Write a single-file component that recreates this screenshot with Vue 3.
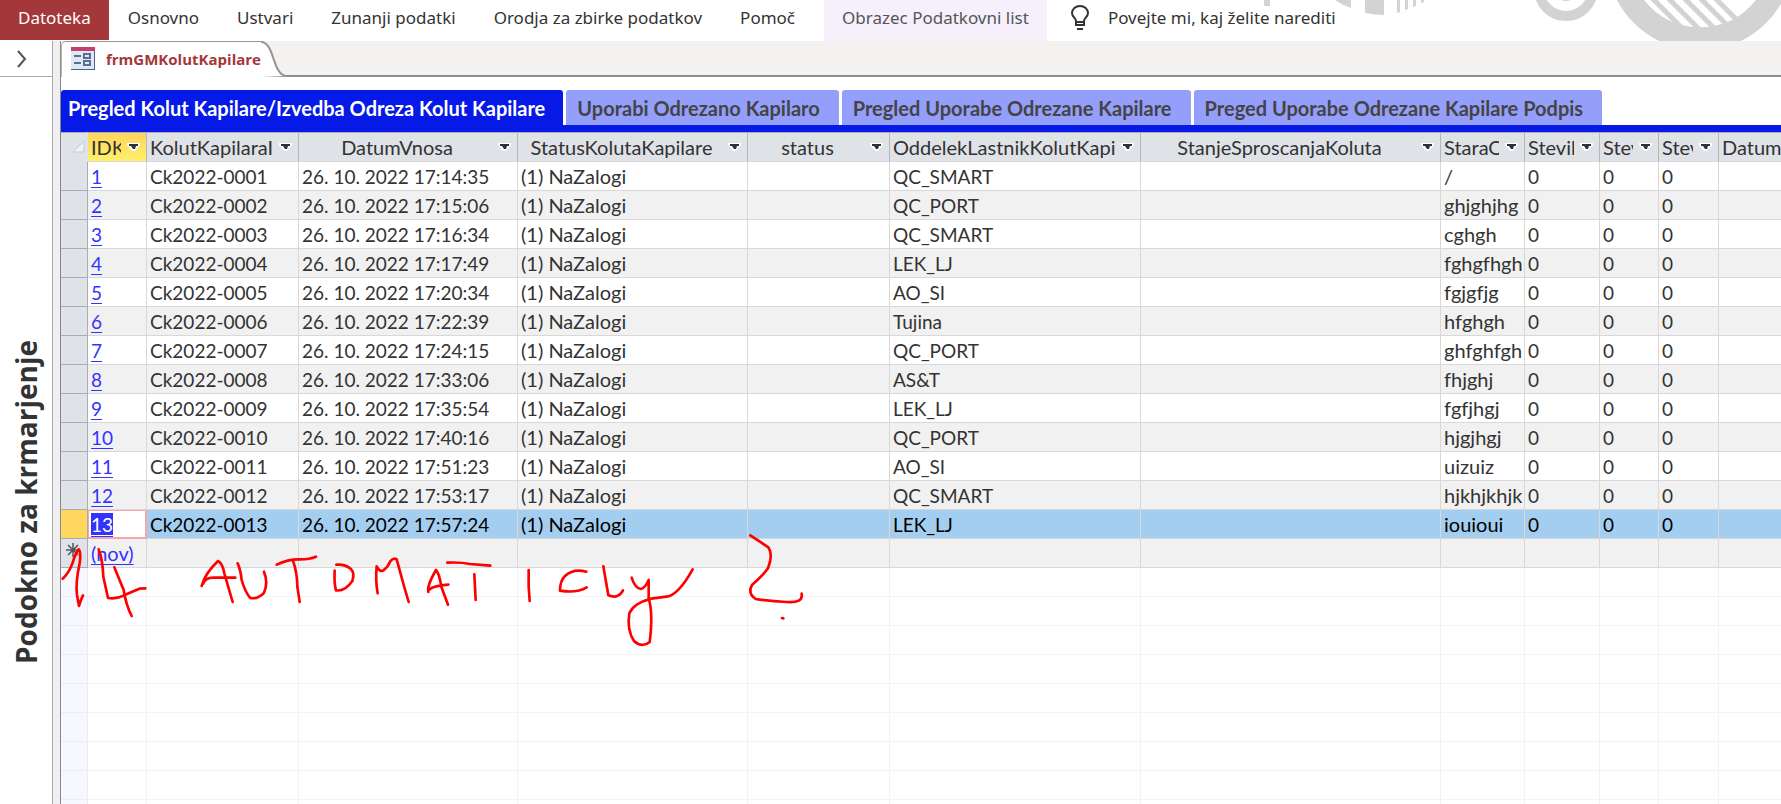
<script setup>
const ribbon = ['Osnovno', 'Ustvari', 'Zunanji podatki', 'Orodja za zbirke podatkov', 'Pomoč']

const pages = [
  { label: 'Pregled Kolut Kapilare/Izvedba Odreza Kolut Kapilare', active: true },
  { label: 'Uporabi Odrezano Kapilaro' },
  { label: 'Pregled Uporabe Odrezane Kapilare' },
  { label: 'Preged Uporabe Odrezane Kapilare Podpis' },
]

const columns = [
  { name: 'IDK', width: 59, current: true },
  { name: 'KolutKapilaraI', width: 152 },
  { name: 'DatumVnosa', width: 219 },
  { name: 'StatusKolutaKapilare', width: 230 },
  { name: 'status', width: 142 },
  { name: 'OddelekLastnikKolutKapil', width: 251 },
  { name: 'StanjeSproscanjaKoluta', width: 300 },
  { name: 'StaraO', width: 84 },
  { name: 'Stevil', width: 75 },
  { name: 'Stev', width: 59 },
  { name: 'Stev', width: 60 },
]

const records = [
  ['17:14:35', 'QC_SMART', '/'],
  ['17:15:06', 'QC_PORT', 'ghjghjhg'],
  ['17:16:34', 'QC_SMART', 'cghgh'],
  ['17:17:49', 'LEK_LJ', 'fghgfhgh'],
  ['17:20:34', 'AO_SI', 'fgjgfjg'],
  ['17:22:39', 'Tujina', 'hfghgh'],
  ['17:24:15', 'QC_PORT', 'ghfghfgh'],
  ['17:33:06', 'AS&T', 'fhjghj'],
  ['17:35:54', 'LEK_LJ', 'fgfjhgj'],
  ['17:40:16', 'QC_PORT', 'hjgjhgj'],
  ['17:51:23', 'AO_SI', 'uizuiz'],
  ['17:53:17', 'QC_SMART', 'hjkhjkhjk'],
  ['17:57:24', 'LEK_LJ', 'iouioui'],
].map(([time, owner, mark], i) => ({
  id: i + 1,
  cells: [
    { text: 'Ck2022-' + String(i + 1).padStart(4, '0') },
    { text: '26. 10. 2022 ' + time },
    { text: '(1) NaZalogi', word: true },
    { text: '' },
    { text: owner },
    { text: '' },
    { text: mark, word: true },
    { text: '0' },
    { text: '0' },
    { text: '0' },
    { text: '' },
  ],
}))
const currentId = 13
const blankRows = 24
</script>

<template>
  <div class="app">
    <header class="ribbon">
      <svg class="decor" viewBox="1260 0 521 41" aria-hidden="true">
        <g fill="#d3d3d3">
          <path d="M1264 0h6v6h-6zM1335 0h16v8Q1342 5 1335 0zM1365 0h19v15Q1374 15 1365 13z" />
          <path d="M1397 0h3v12l-3 1zM1405 0h3v9l-3 1zM1413 0h3v6l-3 1zM1421 0h3v2l-3 1z" />
          <circle cx="1566" cy="-11" r="12" />
        </g>
        <g fill="none" stroke="#d3d3d3">
          <circle cx="1566" cy="-11" r="27" stroke-width="10" />
          <circle cx="1700" cy="-43" r="82" stroke-width="23" />
          <path stroke-width="5" d="M1646-8l40 40M1662-8l42 42M1678-8l40 40M1694-8l36 36M1709-8l32 32" />
        </g>
      </svg>
      <nav class="menu">
        <button class="file">Datoteka</button>
        <button v-for="item in ribbon" :key="item">{{ item }}</button>
        <button class="context">Obrazec Podatkovni list</button>
        <button class="tell">
          <svg width="18" height="26" viewBox="0 0 18 26" fill="none" stroke="#333" stroke-width="2">
            <path d="M5 20v-4C5 13 1 12 1 8a8 7 0 0 1 16 0c0 4-4 5-4 8v4zM5 17h8M6 24h6" />
          </svg>
          <span>Povejte mi, kaj želite narediti</span>
        </button>
      </nav>
    </header>

    <div class="body">
      <aside class="pane">
        <button class="expand" aria-label="Razširi podokno">
          <svg width="10" height="18" viewBox="0 0 10 18" fill="none" stroke="#555" stroke-width="2">
            <path d="M1 1l7 8-7 8" />
          </svg>
        </button>
        <div class="pane-title">Podokno za krmarjenje</div>
      </aside>

      <main class="work">
        <div class="docs">
          <button class="doc">
            <svg class="doc-icon" width="24" height="23" viewBox="0 0 24 23">
              <rect width="24" height="23" fill="#dfe8f5" />
              <rect width="24" height="4" fill="#c2416b" />
              <path d="M0 22.500h24M23.500 4v19" stroke="#50618f" />
              <path d="M3 9h7M3 16h7M13 7h6v4h-6zM13 14h6v4h-6z" fill="none" stroke="#5c6c94" stroke-width="2" />
            </svg>
            <span>frmGMKolutKapilare</span>
          </button>
          <svg class="doc-edge" width="26" height="36" viewBox="0 0 26 36">
            <path d="M0 1C14 1 11 35 26 35L0 36z" fill="#fff" />
            <path d="M0 1C14 1 11 35 26 35" fill="none" stroke="#98948f" stroke-width="2" />
          </svg>
        </div>

        <div class="pages">
          <button v-for="p in pages" :key="p.label" class="page" :class="{ active: p.active }">{{ p.label }}</button>
        </div>

        <table class="sheet">
          <colgroup>
            <col class="selector-col" />
            <col v-for="(c, i) in columns" :key="i" :style="{ width: c.width + 'px' }" />
            <col />
          </colgroup>
          <thead>
            <tr>
              <th class="corner">
                <svg width="12" height="12" viewBox="0 0 12 12"><path d="M11 0v11H0z" fill="#eef2f6" stroke="#c3cbd8" /></svg>
              </th>
              <th v-for="(c, i) in columns" :key="i" :class="{ current: c.current }">
                <div class="head">
                  <span class="name">{{ c.name }}</span>
                  <button class="drop" :aria-label="'Filter ' + c.name">
                    <svg width="13" height="8" viewBox="0 0 13 8">
                      <path d="M0 0h13v2l-5 6H5L0 2z" fill="#fff" />
                      <path d="M2 1h9v2H9L8 6H6L4 3H2z" fill="#2b3338" />
                    </svg>
                  </button>
                </div>
              </th>
              <th class="last">Datum</th>
            </tr>
          </thead>
          <tbody>
            <tr v-for="r in records" :key="r.id" :class="{ selected: r.id === currentId }">
              <td class="selector"></td>
              <td class="id"><a href="#">{{ r.id }}</a></td>
              <td v-for="(c, i) in r.cells" :key="i" :class="{ word: c.word }">{{ c.text }}</td>
            </tr>
            <tr class="new">
              <td class="selector">
                <svg width="14" height="14" viewBox="0 0 14 14" stroke="#555" stroke-width="1.500">
                  <path d="M7 0v14M0 7h14M2 2l10 10M12 2L2 12" />
                </svg>
              </td>
              <td class="id word"><a href="#">(nov)</a></td>
              <td v-for="i in 11" :key="i"></td>
            </tr>
            <tr v-for="n in blankRows" :key="'b' + n" class="blank">
              <td class="selector"></td>
              <td v-for="i in 12" :key="i"></td>
            </tr>
          </tbody>
        </table>
      </main>
    </div>

    <svg class="ink" width="800" height="200" viewBox="0 0 2400 600" aria-hidden="true">
      <path d="M68 296Q88 278 98 248Q106 220 116 208Q124 215 119 250Q106 310 111 345L117 378Q122 360 129 346" />
      <path d="M176 208Q188 240 190 290L204 354Q230 358 252 346L298 326L316 325M223 262L251 330Q258 375 275 408" />
      <path d="M485 318Q495 280 534 243Q548 250 553 280L578 366M489 311Q496 293 520 293H586" />
      <path d="M593 250Q602 270 605 300Q615 335 630 353Q650 360 671 340Q686 310 672 275" />
      <path d="M710 254Q745 237 780 238Q810 238 828 230M759 242Q772 280 772 320L779 366" />
      <path d="M884 272Q882 310 888 331Q915 335 937 303Q945 280 932 266Q915 252 889 254" />
      <path d="M1013 340Q1006 300 1010 259Q1020 278 1030 271Q1045 260 1050 245Q1060 232 1070 238L1092 318L1106 366" />
      <path d="M1165 336Q1160 318 1188 270Q1198 280 1204 320L1224 374M1168 329Q1178 318 1225 314" />
      <path d="M1222 248Q1260 246 1290 252L1351 257M1303 283L1307 360M1466 270V320L1469 363" />
      <path d="M1639 275Q1600 265 1575 288Q1560 302 1560 332Q1610 340 1640 322" />
      <path d="M1690 259L1705 346Q1735 358 1749 331M1775 293Q1785 325 1803 327Q1815 325 1826 300V355Q1840 400 1829 486Q1806 505 1782 483Q1760 450 1768 400Q1780 370 1833 356L1880 350Q1915 345 1958 268" />
      <path d="M2131 166L2185 202Q2200 225 2184 265Q2170 285 2136 315Q2122 340 2147 357Q2190 364 2240 366Q2290 370 2285 341M2226 414L2230 415" />
    </svg>
  </div>
</template>

<style>
body { margin: 0; }
</style>

<style scoped>
.app {
  position: relative;
  height: 100vh;
  overflow: hidden;
  display: flex;
  flex-direction: column;
  background: #fff;
  color: #333;
  font-family: "Noto Sans", "Open Sans", sans-serif;
}
button {
  margin: 0;
  padding: 0;
  border: 0;
  background: none;
  color: inherit;
  font: inherit;
  white-space: nowrap;
}
svg { display: block; }

.ribbon { position: relative; height: 41px; flex: none; }
.decor { position: absolute; top: 0; right: 0; width: 521px; height: 41px; }
.menu { position: relative; display: flex; height: 41px; font-size: 17px; line-height: 24px; }
.menu button { padding: 0 19px 5px; }
.menu .file { height: 40px; padding: 0 18px 4px; background: #a4373a; color: #fff; }
.menu .context { margin-left: 10px; padding: 0 18px 5px; background: #f5f0fc; color: #555; }
.menu .tell { display: flex; align-items: center; gap: 19px; padding: 0 24px 5px; }

.body { flex: 1; min-height: 0; display: flex; }
.pane { width: 52px; flex: none; display: flex; flex-direction: column; border-right: 1px solid #aaa; }
.expand { height: 36px; flex: none; display: flex; align-items: center; padding-left: 17px; border-bottom: 1px solid #aaa; }
.pane-title {
  flex: 1;
  display: flex;
  align-items: center;
  justify-content: center;
  writing-mode: vertical-rl;
  transform: rotate(180deg);
  padding-bottom: 124px;
  font-family: "Open Sans", sans-serif;
  font-size: 28px;
  line-height: 52px;
  font-weight: 700;
  white-space: nowrap;
}

.work { flex: 1; min-width: 0; margin-left: 7px; border-left: 1px solid #85898e; }
.pane + .work { box-shadow: -7px 0 0 #f0f0f2; }
.docs { display: flex; height: 36px; background: linear-gradient(#8a8e93, #8a8e93) bottom / 100% 2px no-repeat #f3f2f1; }
.doc {
  display: flex;
  align-items: center;
  gap: 11px;
  padding: 0 0 2px 9px;
  background: #fff;
  border-top: 1px solid #98948f;
  border-left: 1px solid #c9b59b;
  border-radius: 5px 0 0 0;
  color: #a4373a;
  font-family: "Open Sans", sans-serif;
  font-size: 15px;
  font-weight: 700;
}

.pages { display: flex; gap: 3px; margin-top: 13px; border-bottom: 7px solid #0619e6; font: 700 20px/33px Lato, sans-serif; color: #444; }
.page { padding: 2px 19px 0 11px; background: #949ffc; border-radius: 3px 3px 0 0; }
.page.active { padding: 2px 18px 0 7px; background: #0619e6; color: #fff; }

.sheet {
  width: 100%;
  table-layout: fixed;
  border-collapse: separate;
  border-spacing: 0;
  font: 19px/26px Lato, sans-serif;
  font-variant-ligatures: none;
}
.selector-col { width: 27px; }
th, td {
  box-sizing: border-box;
  height: 29px;
  padding: 1px 0 0 3px;
  border-right: 1px solid #d9d7d7;
  border-bottom: 1px solid #d9d7d7;
  overflow: hidden;
  white-space: nowrap;
  text-align: left;
  vertical-align: baseline;
  font-weight: 400;
}
th {
  height: 30px;
  padding: 0 0 0 3px;
  border-top: 1px solid #a9adb3;
  border-right-color: #b4b7bb;
  background: #dfe2e7;
  font-size: 20px;
  line-height: 28px;
}
th.current { background: linear-gradient(#ffd45c, #fff06c); }
th.last, td:last-child { border-right: 0; }
.word { font-size: 20px; }
.corner { padding: 0 0 0 12px; vertical-align: middle; border-right-color: #dfe2e7; border-bottom-color: #dfe2e7; }
.head { display: flex; align-items: center; }
.name { flex: 1; min-width: 0; overflow: hidden; text-align: center; }
.drop { width: 25px; display: flex; justify-content: center; }
tbody tr:nth-child(even) td { background: #f1f1f1; }
tbody td.selector, tbody tr:nth-child(even) td.selector { padding: 0; vertical-align: middle; background: #dfe2e7; border-color: #a9adb3; }
.new .selector svg { margin: 0 auto 6px 5px; }
.id a { color: #3333ff; text-decoration: underline; text-decoration-thickness: 1px; text-underline-offset: 3px; }
tbody tr.selected td { background: #a4cef0; color: #000; }
tbody tr.selected td.selector { background: #ffd75e; }
tbody tr.selected td.id { background: #fff; box-shadow: inset 0 0 0 1px #f8a5a8; border-color: #f8a5a8; }
.selected .id a { display: inline-block; line-height: 24px; background: #3333ff; color: #fff; }
tbody tr.blank td, tbody tr.blank:nth-child(even) td { background: #fff; border-color: #f3f3f3; }
tbody tr.blank td.selector, tbody tr.blank:nth-child(even) td.selector { background: #f6f7ff; border-color: #ececf2; }

.ink { position: absolute; left: 40px; top: 480px; pointer-events: none; fill: none; stroke: #f00; stroke-width: 8; stroke-linecap: round; stroke-linejoin: round; }
</style>
